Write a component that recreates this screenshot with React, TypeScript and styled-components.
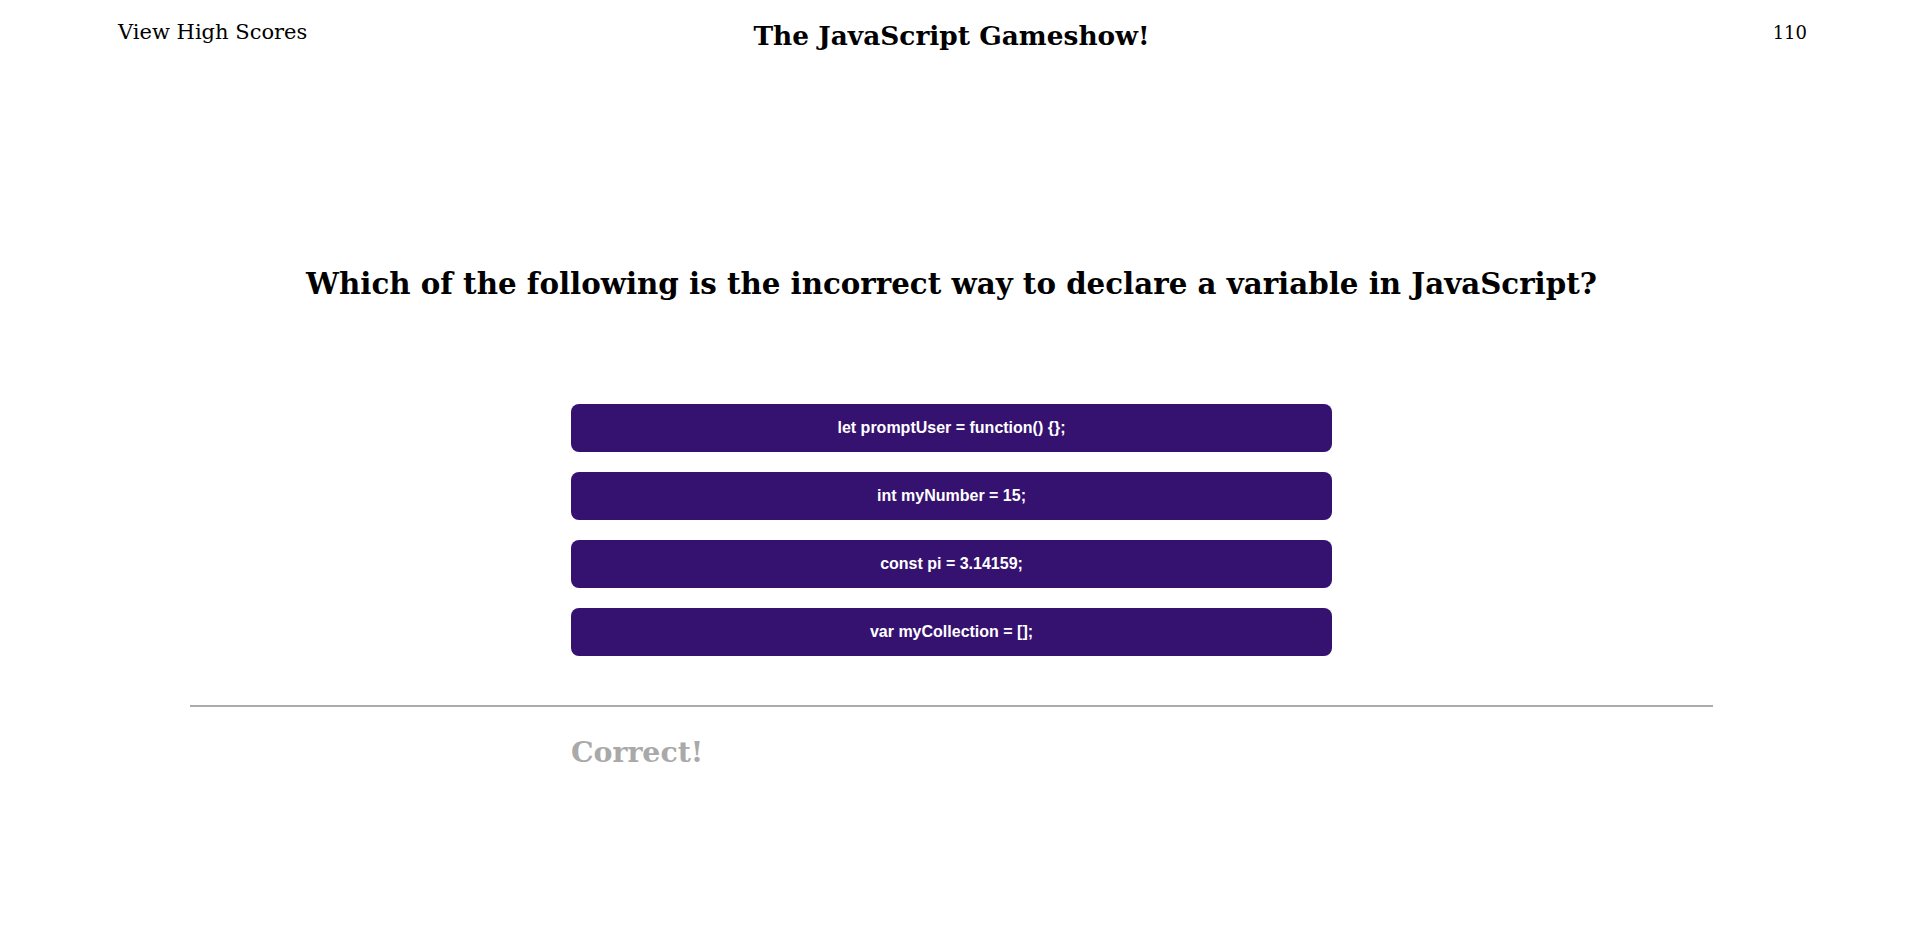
import styled, { createGlobalStyle } from "styled-components";

const GlobalStyle = createGlobalStyle`
  body {
    margin: 0;
    background: #fff;
    color: #000;
    font-family: "DejaVu Serif", "Liberation Serif", serif;
  }
`;

const choices = [
  "let promptUser = function() {};",
  "int myNumber = 15;",
  "const pi = 3.14159;",
  "var myCollection = [];",
];

const App = () => {
  return (
    <>
      <GlobalStyle />
      <Page>
        <Header>
          <HighScoresLink href="#">View High Scores</HighScoresLink>
          <Title>The JavaScript Gameshow!</Title>
          <Score>110</Score>
        </Header>
        <Main>
          <Question>
            Which of the following is the incorrect way to declare a variable in
            JavaScript?
          </Question>
          <ChoiceList>
            {choices.map((c) => (
              <ChoiceButton key={c} type="button">
                {c}
              </ChoiceButton>
            ))}
          </ChoiceList>
          <Divider />
          <Feedback>
            <FeedbackText>Correct!</FeedbackText>
          </Feedback>
        </Main>
      </Page>
    </>
  );
};

const Page = styled.div`
  width: calc(100% - 15px);
  min-height: 100vh;
`;

const Header = styled.header`
  display: grid;
  grid-template-columns: 1fr auto 1fr;
  align-items: start;
  padding: 20px 96px 0;
`;

const HighScoresLink = styled.a`
  justify-self: start;
  padding-left: 22px;
  font-size: 21px;
  color: #000;
  text-decoration: none;
  cursor: pointer;
`;

const Title = styled.h1`
  margin: 0;
  font-size: 26.4px;
  font-weight: bold;
`;

const Score = styled.div`
  justify-self: end;
  font-size: 18px;
  padding-top: 2px;
`;

const Main = styled.main`
  display: flex;
  flex-direction: column;
  align-items: center;
`;

const Question = styled.h2`
  margin: 215px 0 0;
  font-size: 29.3px;
  font-weight: bold;
  text-align: center;
`;

const ChoiceList = styled.div`
  width: 40%;
  margin-top: 103px;
  display: flex;
  flex-direction: column;
  gap: 20px;
`;

const ChoiceButton = styled.button`
  height: 48px;
  border: none;
  border-radius: 8px;
  background-color: #35126f;
  color: #fff;
  font-family: "Liberation Sans", Arial, sans-serif;
  font-size: 16px;
  font-weight: bold;
  cursor: pointer;

  &:hover {
    background-color: #4a1e91;
  }
`;

const Divider = styled.hr`
  width: 80%;
  margin: 49px 0 0;
  border: none;
  border-top: 2px solid #ababab;
`;

const Feedback = styled.div`
  width: 40%;
  margin-top: 28px;
`;

const FeedbackText = styled.h3`
  margin: 0;
  font-size: 28.4px;
  font-weight: bold;
  color: #a9a9a9;
`;

export default App;
